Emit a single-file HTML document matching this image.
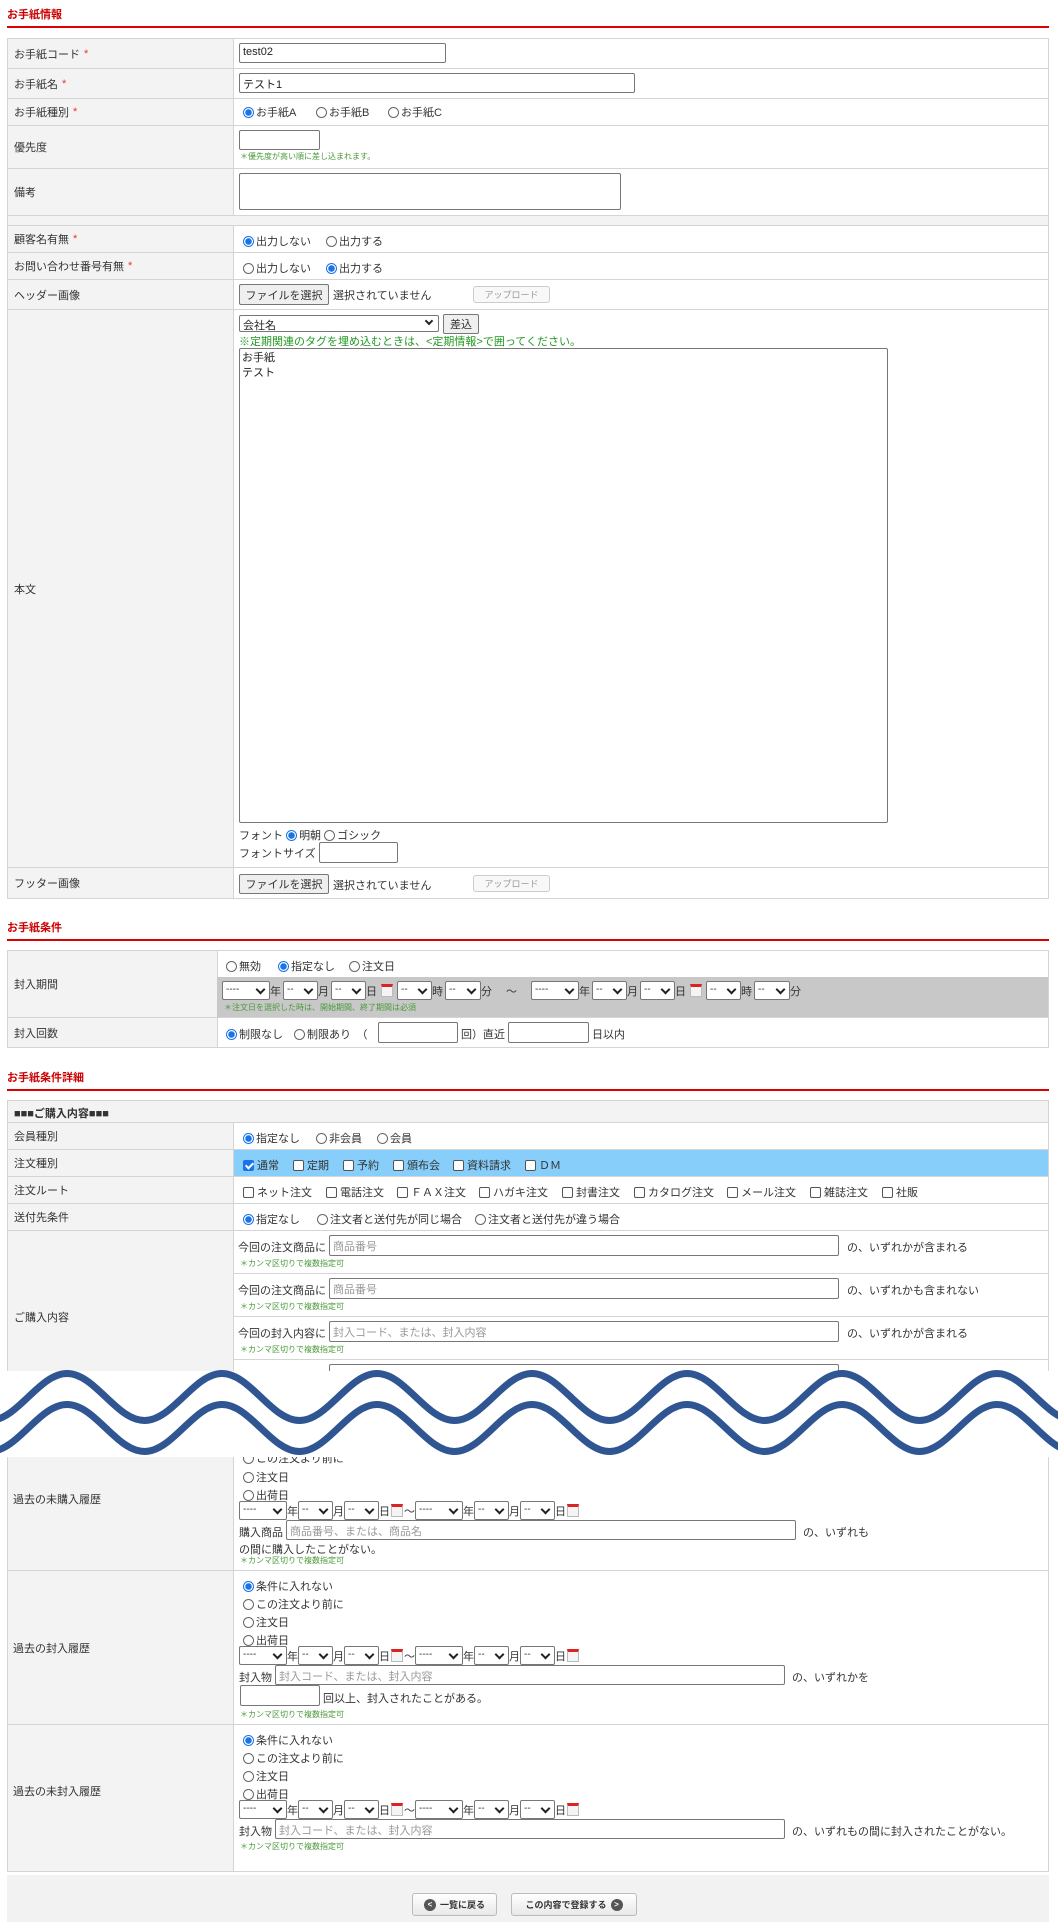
<!DOCTYPE html>
<html><head><meta charset="utf-8">
<style>
*{box-sizing:border-box}
body{margin:0;width:1058px;height:1922px;position:relative;background:#fff;font-family:"Liberation Sans","Noto Sans CJK JP",sans-serif;font-size:11px;color:#333;overflow:hidden}
.a{position:absolute;white-space:nowrap}
.h{position:absolute;left:7px;color:#c00;font-weight:bold;font-size:11px}
.line{position:absolute;left:7px;width:1042px;height:2px;background:#d00}
.row{position:absolute;left:7px;width:1042px;border:1px solid #d4d4d4;background:#fff}
.lab{position:absolute;left:0;top:0;bottom:0;background:#f2f3f2;border-right:1px solid #d4d4d4;display:flex;align-items:center;padding-left:6px}
.req{color:#e33;margin-left:4px}
.in{position:absolute;border:1px solid #777;border-radius:2px;background:#fff;font-size:11px;padding:2px 3px;color:#222}
.ph{color:#999}
.note{position:absolute;color:#4a9a3a;font-size:8px;white-space:nowrap}
.r{display:inline-block;width:11px;height:11px;border:1px solid #666;border-radius:50%;vertical-align:-2px;margin-right:2px;background:#fff}
.r.on{border:1px solid #1a73e8;background:radial-gradient(circle,#1a73e8 3px,#fff 3.5px)}
.c{display:inline-block;width:11px;height:11px;border:1px solid #555;border-radius:2px;vertical-align:-2px;margin-right:3px;background:#fff}
.c.on{background:#1a73e8;border-color:#1a73e8;position:relative}
.c.on:after{content:"";position:absolute;left:3px;top:0px;width:3px;height:6px;border:solid #fff;border-width:0 2px 2px 0;transform:rotate(45deg)}
.btn{position:absolute;border:1px solid #777;border-radius:2px;background:#efefef;font-size:11px;display:flex;align-items:center;justify-content:center}
.up{position:absolute;border:1px solid #ccc;border-radius:3px;background:#f8f8f8;color:#999;font-size:9px;display:flex;align-items:center;justify-content:center}
.sel{display:inline-block;height:19px;border:1px solid #777;border-radius:2px;background:#fff;font-size:10px;padding:2px 3px;position:relative;vertical-align:middle}
.sel:after{content:"";position:absolute;right:5px;top:4px;width:5px;height:5px;border:solid #222;border-width:0 2px 2px 0;transform:rotate(45deg)}
.cal{display:inline-block;width:12px;height:13px;border:1px solid #bbb;border-top:3px solid #d22;background:#f4f4f4;vertical-align:middle;margin:0 4px}
.dl{position:absolute;white-space:nowrap;font-size:11px;display:flex;align-items:center}
</style></head><body>

<div class="h" style="top:6px">お手紙情報</div>
<div class="line" style="top:26px"></div>

<div class="row" style="top:38px;height:31px"><div class="lab" style="width:226px">お手紙コード<span class="req">*</span></div></div>
<div class="row" style="top:68px;height:31px"><div class="lab" style="width:226px">お手紙名<span class="req">*</span></div></div>
<div class="row" style="top:98px;height:28px"><div class="lab" style="width:226px">お手紙種別<span class="req">*</span></div></div>
<div class="row" style="top:125px;height:44px"><div class="lab" style="width:226px">優先度</div></div>
<div class="row" style="top:168px;height:48px"><div class="lab" style="width:226px">備考</div></div>
<div class="row" style="top:215px;height:11px;background:#f2f3f2"></div>
<div class="row" style="top:225px;height:28px"><div class="lab" style="width:226px">顧客名有無<span class="req">*</span></div></div>
<div class="row" style="top:252px;height:28px"><div class="lab" style="width:226px">お問い合わせ番号有無<span class="req">*</span></div></div>
<div class="row" style="top:279px;height:31px"><div class="lab" style="width:226px">ヘッダー画像</div></div>
<div class="row" style="top:309px;height:559px"><div class="lab" style="width:226px">本文</div></div>
<div class="row" style="top:867px;height:32px"><div class="lab" style="width:226px">フッター画像</div></div>

<div class="in" style="left:239px;top:43px;width:207px;height:20px">test02</div>
<div class="in" style="left:239px;top:73px;width:396px;height:20px">テスト1</div>
<div class="a" style="left:243px;top:104px"><span class="r on"></span>お手紙A</div>
<div class="a" style="left:316px;top:104px"><span class="r"></span>お手紙B</div>
<div class="a" style="left:388px;top:104px"><span class="r"></span>お手紙C</div>
<div class="in" style="left:239px;top:130px;width:81px;height:20px"></div>
<div class="note" style="left:240px;top:151px">＊優先度が高い順に差し込まれます。</div>
<div class="in" style="left:239px;top:173px;width:382px;height:37px"></div>
<div class="a" style="left:243px;top:233px"><span class="r on"></span>出力しない</div>
<div class="a" style="left:326px;top:233px"><span class="r"></span>出力する</div>
<div class="a" style="left:243px;top:260px"><span class="r"></span>出力しない</div>
<div class="a" style="left:326px;top:260px"><span class="r on"></span>出力する</div>
<div class="btn" style="left:239px;top:284px;width:90px;height:21px">ファイルを選択</div>
<div class="a" style="left:333px;top:287px">選択されていません</div>
<div class="up" style="left:473px;top:286px;width:77px;height:17px">アップロード</div>

<div class="in" style="left:239px;top:315px;width:200px;height:17px;padding:1px 3px">会社名</div>
<div class="a" style="left:426px;top:318px;width:6px;height:6px;border:solid #222;border-width:0 2px 2px 0;transform:rotate(45deg)"></div>
<div class="btn" style="left:443px;top:314px;width:36px;height:20px">差込</div>
<div class="a" style="left:239px;top:333px;color:#229922;font-size:11px">※定期関連のタグを埋め込むときは、&lt;定期情報&gt;で囲ってください。</div>
<div class="in" style="left:239px;top:348px;width:649px;height:475px;line-height:15px;padding:2px 2px">お手紙<br>テスト</div>
<div class="a" style="left:239px;top:827px">フォント <span class="r on"></span>明朝 <span class="r"></span>ゴシック</div>
<div class="a" style="left:239px;top:845px">フォントサイズ</div>
<div class="in" style="left:319px;top:842px;width:79px;height:21px"></div>
<div class="btn" style="left:239px;top:874px;width:90px;height:20px">ファイルを選択</div>
<div class="a" style="left:333px;top:877px">選択されていません</div>
<div class="up" style="left:473px;top:875px;width:77px;height:17px">アップロード</div>

<div class="h" style="top:919px">お手紙条件</div>
<div class="line" style="top:939px"></div>
<div class="row" style="top:950px;height:68px"><div class="lab" style="width:210px">封入期間</div></div>
<div class="row" style="top:1017px;height:31px"><div class="lab" style="width:210px">封入回数</div></div>
<div class="a" style="left:217px;top:977px;width:831px;height:40px;background:#c8c8c8"></div>
<div class="a" style="left:226px;top:958px"><span class="r"></span>無効</div>
<div class="a" style="left:278px;top:958px"><span class="r on"></span>指定なし</div>
<div class="a" style="left:349px;top:958px"><span class="r"></span>注文日</div>
<div class="dl" style="left:222px;top:981px">
<span class="sel" style="width:48px">----</span>年<span class="sel" style="width:35px;margin-left:2px">--</span>月<span class="sel" style="width:35px;margin-left:2px">--</span>日<span class="cal"></span><span class="sel" style="width:35px">--</span>時<span class="sel" style="width:36px;margin-left:2px">--</span>分<span style="margin:0 14px 0 14px">～</span><span class="sel" style="width:48px">----</span>年<span class="sel" style="width:35px;margin-left:2px">--</span>月<span class="sel" style="width:35px;margin-left:2px">--</span>日<span class="cal"></span><span class="sel" style="width:35px">--</span>時<span class="sel" style="width:36px;margin-left:2px">--</span>分</div>
<div class="note" style="left:224px;top:1002px">＊注文日を選択した時は、開始期間、終了期間は必須</div>
<div class="a" style="left:226px;top:1026px"><span class="r on"></span>制限なし　<span class="r"></span>制限あり　（</div>
<div class="in" style="left:378px;top:1022px;width:80px;height:21px"></div>
<div class="a" style="left:461px;top:1026px">回）直近</div>
<div class="in" style="left:508px;top:1022px;width:81px;height:21px"></div>
<div class="a" style="left:592px;top:1026px">日以内</div>

<div class="h" style="top:1069px">お手紙条件詳細</div>
<div class="line" style="top:1089px"></div>
<div class="row" style="top:1100px;height:23px;background:#f2f3f2;padding:4px 6px;font-weight:bold">■■■ご購入内容■■■</div>
<div class="row" style="top:1122px;height:28px"><div class="lab" style="width:226px">会員種別</div></div>
<div class="row" style="top:1149px;height:28px;background:#87cefa"><div class="lab" style="width:226px">注文種別</div></div>
<div class="row" style="top:1176px;height:28px"><div class="lab" style="width:226px">注文ルート</div></div>
<div class="row" style="top:1203px;height:28px"><div class="lab" style="width:226px">送付先条件</div></div>
<div class="row" style="top:1230px;height:642px"><div class="lab" style="width:226px;align-items:flex-start;padding-top:78px">ご購入内容</div></div>
<div class="a" style="left:233px;top:1273px;width:816px;height:1px;background:#d4d4d4"></div>
<div class="a" style="left:233px;top:1316px;width:816px;height:1px;background:#d4d4d4"></div>
<div class="a" style="left:233px;top:1359px;width:816px;height:1px;background:#d4d4d4"></div>
<div class="a" style="left:233px;top:1570px;width:816px;height:1px;background:#d4d4d4"></div>
<div class="a" style="left:233px;top:1724px;width:816px;height:1px;background:#d4d4d4"></div>
<div class="a" style="left:7px;top:1570px;width:226px;height:1px;background:#d4d4d4"></div>
<div class="a" style="left:7px;top:1724px;width:226px;height:1px;background:#d4d4d4"></div>

<div class="a" style="left:243px;top:1130px"><span class="r on"></span>指定なし</div>
<div class="a" style="left:316px;top:1130px"><span class="r"></span>非会員</div>
<div class="a" style="left:377px;top:1130px"><span class="r"></span>会員</div>
<div class="a" style="left:243px;top:1157px"><span class="c on"></span>通常</div>
<div class="a" style="left:293px;top:1157px"><span class="c"></span>定期</div>
<div class="a" style="left:343px;top:1157px"><span class="c"></span>予約</div>
<div class="a" style="left:393px;top:1157px"><span class="c"></span>頒布会</div>
<div class="a" style="left:453px;top:1157px"><span class="c"></span>資料請求</div>
<div class="a" style="left:525px;top:1157px"><span class="c"></span>ＤＭ</div>
<div class="a" style="left:243px;top:1184px"><span class="c"></span>ネット注文</div>
<div class="a" style="left:326px;top:1184px"><span class="c"></span>電話注文</div>
<div class="a" style="left:397px;top:1184px"><span class="c"></span>ＦＡＸ注文</div>
<div class="a" style="left:479px;top:1184px"><span class="c"></span>ハガキ注文</div>
<div class="a" style="left:562px;top:1184px"><span class="c"></span>封書注文</div>
<div class="a" style="left:634px;top:1184px"><span class="c"></span>カタログ注文</div>
<div class="a" style="left:727px;top:1184px"><span class="c"></span>メール注文</div>
<div class="a" style="left:810px;top:1184px"><span class="c"></span>雑誌注文</div>
<div class="a" style="left:882px;top:1184px"><span class="c"></span>社販</div>
<div class="a" style="left:243px;top:1211px"><span class="r on"></span>指定なし</div>
<div class="a" style="left:317px;top:1211px"><span class="r"></span>注文者と送付先が同じ場合</div>
<div class="a" style="left:475px;top:1211px"><span class="r"></span>注文者と送付先が違う場合</div>

<div class="a" style="left:238px;top:1239px">今回の注文商品に</div>
<div class="in" style="left:329px;top:1235px;width:510px;height:21px"><span class="ph">商品番号</span></div>
<div class="a" style="left:847px;top:1239px">の、いずれかが含まれる</div>
<div class="note" style="left:240px;top:1258px">＊カンマ区切りで複数指定可</div>
<div class="a" style="left:238px;top:1282px">今回の注文商品に</div>
<div class="in" style="left:329px;top:1278px;width:510px;height:21px"><span class="ph">商品番号</span></div>
<div class="a" style="left:847px;top:1282px">の、いずれかも含まれない</div>
<div class="note" style="left:240px;top:1301px">＊カンマ区切りで複数指定可</div>
<div class="a" style="left:238px;top:1325px">今回の封入内容に</div>
<div class="in" style="left:329px;top:1321px;width:510px;height:21px"><span class="ph">封入コード、または、封入内容</span></div>
<div class="a" style="left:847px;top:1325px">の、いずれかが含まれる</div>
<div class="note" style="left:240px;top:1344px">＊カンマ区切りで複数指定可</div>
<div class="in" style="left:329px;top:1364px;width:510px;height:21px"></div>

<div class="a" style="left:13px;top:1491px">過去の未購入履歴</div>
<div class="a" style="left:243px;top:1450px"><span class="r"></span>この注文より前に</div>
<div class="a" style="left:243px;top:1469px"><span class="r"></span>注文日</div>
<div class="a" style="left:243px;top:1487px"><span class="r"></span>出荷日</div>
<div class="dl" style="left:239px;top:1501px"><span class="sel" style="width:48px">----</span>年<span class="sel" style="width:35px">--</span>月<span class="sel" style="width:35px">--</span>日<span class="cal" style="margin:0 1px"></span>～<span class="sel" style="width:48px">----</span>年<span class="sel" style="width:35px">--</span>月<span class="sel" style="width:35px">--</span>日<span class="cal" style="margin:0 1px"></span></div>
<div class="a" style="left:239px;top:1524px">購入商品</div>
<div class="in" style="left:286px;top:1520px;width:510px;height:20px"><span class="ph">商品番号、または、商品名</span></div>
<div class="a" style="left:803px;top:1524px">の、いずれも</div>
<div class="a" style="left:239px;top:1541px">の間に購入したことがない。</div>
<div class="note" style="left:240px;top:1555px">＊カンマ区切りで複数指定可</div>

<div class="a" style="left:13px;top:1640px">過去の封入履歴</div>
<div class="a" style="left:243px;top:1578px"><span class="r on"></span>条件に入れない</div>
<div class="a" style="left:243px;top:1596px"><span class="r"></span>この注文より前に</div>
<div class="a" style="left:243px;top:1614px"><span class="r"></span>注文日</div>
<div class="a" style="left:243px;top:1632px"><span class="r"></span>出荷日</div>
<div class="dl" style="left:239px;top:1646px"><span class="sel" style="width:48px">----</span>年<span class="sel" style="width:35px">--</span>月<span class="sel" style="width:35px">--</span>日<span class="cal" style="margin:0 1px"></span>～<span class="sel" style="width:48px">----</span>年<span class="sel" style="width:35px">--</span>月<span class="sel" style="width:35px">--</span>日<span class="cal" style="margin:0 1px"></span></div>
<div class="a" style="left:239px;top:1669px">封入物</div>
<div class="in" style="left:275px;top:1665px;width:510px;height:20px"><span class="ph">封入コード、または、封入内容</span></div>
<div class="a" style="left:792px;top:1669px">の、いずれかを</div>
<div class="in" style="left:240px;top:1685px;width:80px;height:21px"></div>
<div class="a" style="left:323px;top:1690px">回以上、封入されたことがある。</div>
<div class="note" style="left:240px;top:1709px">＊カンマ区切りで複数指定可</div>

<div class="a" style="left:13px;top:1783px">過去の未封入履歴</div>
<div class="a" style="left:243px;top:1732px"><span class="r on"></span>条件に入れない</div>
<div class="a" style="left:243px;top:1750px"><span class="r"></span>この注文より前に</div>
<div class="a" style="left:243px;top:1768px"><span class="r"></span>注文日</div>
<div class="a" style="left:243px;top:1786px"><span class="r"></span>出荷日</div>
<div class="dl" style="left:239px;top:1800px"><span class="sel" style="width:48px">----</span>年<span class="sel" style="width:35px">--</span>月<span class="sel" style="width:35px">--</span>日<span class="cal" style="margin:0 1px"></span>～<span class="sel" style="width:48px">----</span>年<span class="sel" style="width:35px">--</span>月<span class="sel" style="width:35px">--</span>日<span class="cal" style="margin:0 1px"></span></div>
<div class="a" style="left:239px;top:1823px">封入物</div>
<div class="in" style="left:275px;top:1819px;width:510px;height:20px"><span class="ph">封入コード、または、封入内容</span></div>
<div class="a" style="left:792px;top:1823px">の、いずれもの間に封入されたことがない。</div>
<div class="note" style="left:240px;top:1841px">＊カンマ区切りで複数指定可</div>

<div class="a" style="left:7px;top:1875px;width:1042px;height:47px;background:#f2f2f2"></div>
<div class="a" style="left:412px;top:1893px;width:85px;height:23px;border:1px solid #bbb;border-radius:3px;background:linear-gradient(#fff,#e8e8e8);font-size:9px;font-weight:bold;display:flex;align-items:center;justify-content:center;gap:4px"><span style="width:12px;height:12px;border-radius:50%;background:#555;color:#fff;font-size:8px;line-height:12px;text-align:center">&lt;</span>一覧に戻る</div>
<div class="a" style="left:511px;top:1893px;width:126px;height:23px;border:1px solid #bbb;border-radius:3px;background:linear-gradient(#fff,#e8e8e8);font-size:9px;font-weight:bold;display:flex;align-items:center;justify-content:center;gap:4px">この内容で登録する<span style="width:12px;height:12px;border-radius:50%;background:#555;color:#fff;font-size:8px;line-height:12px;text-align:center">&gt;</span></div>

<div class="a" style="left:0;top:1371px;width:1058px;height:86px;background:#fff"></div>
<svg class="a" style="left:0;top:1360px" width="1058" height="110" viewBox="0 1360 1058 110">
<g fill="none" stroke="#2f5592" stroke-width="7" stroke-linecap="round">
<path id="wv" d="M-88 1373.5 C-59.8 1373.5 -38.7 1420.5 -10.5 1420.5 S38.8 1373.5 67 1373.5 S116.3 1420.5 144.5 1420.5 S193.8 1373.5 222 1373.5 S271.3 1420.5 299.5 1420.5 S348.8 1373.5 377 1373.5 S426.3 1420.5 454.5 1420.5 S503.8 1373.5 532 1373.5 S581.3 1420.5 609.5 1420.5 S658.8 1373.5 687 1373.5 S736.3 1420.5 764.5 1420.5 S813.8 1373.5 842 1373.5 S891.3 1420.5 919.5 1420.5 S968.8 1373.5 997 1373.5 S1046.3 1420.5 1074.5 1420.5"/>
<path transform="translate(0,31)" d="M-88 1373.5 C-59.8 1373.5 -38.7 1420.5 -10.5 1420.5 S38.8 1373.5 67 1373.5 S116.3 1420.5 144.5 1420.5 S193.8 1373.5 222 1373.5 S271.3 1420.5 299.5 1420.5 S348.8 1373.5 377 1373.5 S426.3 1420.5 454.5 1420.5 S503.8 1373.5 532 1373.5 S581.3 1420.5 609.5 1420.5 S658.8 1373.5 687 1373.5 S736.3 1420.5 764.5 1420.5 S813.8 1373.5 842 1373.5 S891.3 1420.5 919.5 1420.5 S968.8 1373.5 997 1373.5 S1046.3 1420.5 1074.5 1420.5"/>
</g>
</svg>
</body></html>
